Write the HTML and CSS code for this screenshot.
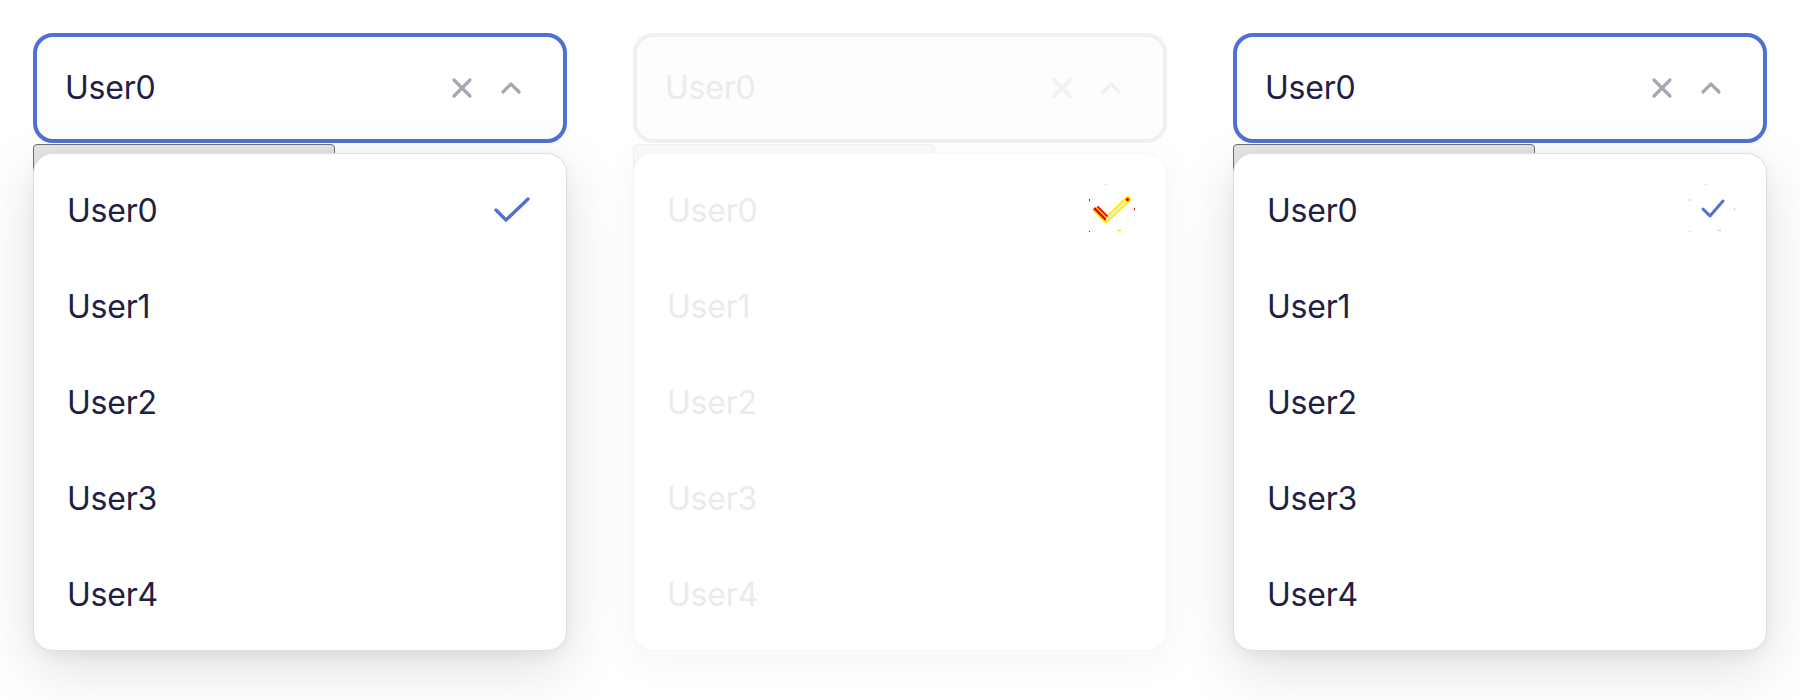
FILE: index.html
```html
<!DOCTYPE html>
<html>
<head>
<meta charset="utf-8">
<link rel="stylesheet" href="styles.css">
</head>
<body>
<div class="row">
  <div class="col">
    <div class="select">
      <span class="value">User0</span>
      <span class="icons">
        <svg class="ico" width="22" height="22" viewBox="0 0 22 22"><path d="M3 3 L19 19 M19 3 L3 19" /></svg>
        <svg class="ico" width="22" height="14" viewBox="0 0 22 14"><path d="M3 11 L11 3 L19 11" /></svg>
      </span>
    </div>
    <div class="menu-wrap">
      <div class="tab"></div>
      <ul class="menu">
        <li class="item"><span>User0</span>
          <svg class="check" width="38" height="28" viewBox="0 0 38 28"><path d="M3 14 L13 24 L35 3" /></svg>
        </li>
        <li class="item"><span>User1</span></li>
        <li class="item"><span>User2</span></li>
        <li class="item"><span>User3</span></li>
        <li class="item"><span>User4</span></li>
      </ul>
    </div>
  </div>

  <div class="col faded">
    <div class="select">
      <span class="value">User0</span>
      <span class="icons">
        <svg class="ico" width="22" height="22" viewBox="0 0 22 22"><path d="M3 3 L19 19 M19 3 L3 19" /></svg>
        <svg class="ico" width="22" height="14" viewBox="0 0 22 14"><path d="M3 11 L11 3 L19 11" /></svg>
      </span>
    </div>
    <div class="menu-wrap">
      <div class="tab"></div>
      <ul class="menu">
        <li class="item"><span>User0</span>
          <span class="check-box">
            <svg class="check-glitch" width="54" height="52" viewBox="0 0 54 52">
              <path class="g-outline" d="M11 26 L21 36 L43 15" />
              <path class="g-red" d="M10 25 L20 35" />
              <path class="g-red thin" d="M13 23 L22 32" />
              <path class="g-core" d="M22 35 L42 16" />
              <circle class="g-dot" cx="42.5" cy="15.5" r="1.8" />
              <rect class="g-dot" x="4" y="15" width="1" height="2" />
              <rect class="g-yel" x="20" y="0" width="1" height="1" />
              <rect class="g-dot" x="49" y="24" width="1" height="2" />
              <rect class="g-dot" x="4" y="47" width="1" height="1" />
              <rect class="g-yel" x="33" y="46" width="3" height="1" />
            </svg>
          </span>
        </li>
        <li class="item"><span>User1</span></li>
        <li class="item"><span>User2</span></li>
        <li class="item"><span>User3</span></li>
        <li class="item"><span>User4</span></li>
      </ul>
    </div>
  </div>

  <div class="col">
    <div class="select">
      <span class="value">User0</span>
      <span class="icons">
        <svg class="ico" width="22" height="22" viewBox="0 0 22 22"><path d="M3 3 L19 19 M19 3 L3 19" /></svg>
        <svg class="ico" width="22" height="14" viewBox="0 0 22 14"><path d="M3 11 L11 3 L19 11" /></svg>
      </span>
    </div>
    <div class="menu-wrap">
      <div class="tab"></div>
      <ul class="menu">
        <li class="item"><span>User0</span>
          <span class="check-box">
            <svg class="check-small" width="54" height="52" viewBox="0 0 54 52">
              <path class="s-check" d="M18 25 L25 32 L38 17" />
              <rect class="s-dot" x="4" y="15" width="1" height="2" />
              <rect class="s-dot" x="20" y="0" width="1" height="1" />
              <rect class="s-dot" x="49" y="24" width="1" height="2" />
              <rect class="s-dot" x="4" y="47" width="1" height="1" />
              <rect class="s-dot" x="33" y="46" width="3" height="1" />
            </svg>
          </span>
        </li>
        <li class="item"><span>User1</span></li>
        <li class="item"><span>User2</span></li>
        <li class="item"><span>User3</span></li>
        <li class="item"><span>User4</span></li>
      </ul>
    </div>
  </div>
</div>
</body>
</html>
```

FILE: styles.css
```css
* { box-sizing: border-box; }

html, body {
  margin: 0;
  padding: 0;
  background: #ffffff;
}

body {
  font-family: Inter, "Noto Sans", "Liberation Sans", sans-serif;
  color: #1e2142;
  min-height: 700px;
}

.row {
  display: flex;
  gap: 66px;
  padding: 33px 0 0 33px;
}

.col {
  width: 534px;
  display: flex;
  flex-direction: column;
}

.select {
  height: 110px;
  border: 4px solid #5170d2;
  border-radius: 20px;
  background: #ffffff;
  display: flex;
  align-items: center;
  justify-content: space-between;
  padding: 0 41px 0 28px;
}

.value {
  font-size: 32px;
  line-height: 1;
  letter-spacing: -0.2px;
}

.icons {
  display: flex;
  align-items: center;
  gap: 27px;
}

.ico path {
  fill: none;
  stroke: #a7a7b2;
  stroke-width: 3.2;
  stroke-linecap: round;
  stroke-linejoin: round;
}

.menu-wrap {
  position: relative;
  padding-top: 10px;
}

.tab {
  position: absolute;
  left: 0;
  top: 1px;
  width: 302px;
  height: 30px;
  background: #e6e6e6;
  border: 1.5px solid #707070;
  border-radius: 4px 4px 0 0;
}

.menu {
  position: relative;
  list-style: none;
  margin: 0;
  padding: 8px 0;
  background: #ffffff;
  border: 1px solid #dfdfdf;
  border-radius: 20px;
  box-shadow: 0 18px 60px rgba(0, 0, 0, 0.13), 0 4px 14px rgba(0, 0, 0, 0.05);
}

.item {
  height: 96px;
  display: flex;
  align-items: center;
  justify-content: space-between;
  padding: 0 37px 0 33px;
  font-size: 32px;
  letter-spacing: -0.2px;
}

.check {
  margin-right: -2px;
}

.check path {
  fill: none;
  stroke: #5170d2;
  stroke-width: 3.4;
  stroke-linecap: round;
  stroke-linejoin: round;
}

.check-box {
  width: 38px;
  height: 28px;
  position: relative;
  margin-right: -2px;
}

.check-glitch,
.check-small {
  position: absolute;
  left: -8px;
  top: -12px;
}

.g-outline {
  fill: none;
  stroke: #fff200;
  stroke-width: 6;
  stroke-linecap: round;
  stroke-linejoin: round;
}

.g-red {
  fill: none;
  stroke: #ee0000;
  stroke-width: 2.6;
  stroke-linecap: square;
}

.g-red.thin {
  stroke-width: 1.8;
}

.g-core {
  fill: none;
  stroke: #e9e9ec;
  stroke-width: 2.4;
  stroke-linecap: round;
}

.g-dot { fill: #ee0000; }
.g-yel { fill: #f2c400; }

.s-check {
  fill: none;
  stroke: #5170d2;
  stroke-width: 3;
  stroke-linecap: round;
  stroke-linejoin: round;
}

.s-dot { fill: #b8c2e6; }

/* faded (disabled-looking) middle column */
.faded .select {
  border-color: #f0f0f0;
  background: #fdfdfd;
}

.faded .value,
.faded .item {
  color: #ebebec;
}

.faded .ico path {
  stroke: #f0f0f0;
}

.faded .tab {
  background: #fafafa;
  border-color: #f1f1f1;
}

.faded .menu {
  border-color: #f6f6f6;
  box-shadow: 0 10px 14px 22px rgba(0, 0, 0, 0.012), 0 8px 30px rgba(0, 0, 0, 0.02);
}
```
